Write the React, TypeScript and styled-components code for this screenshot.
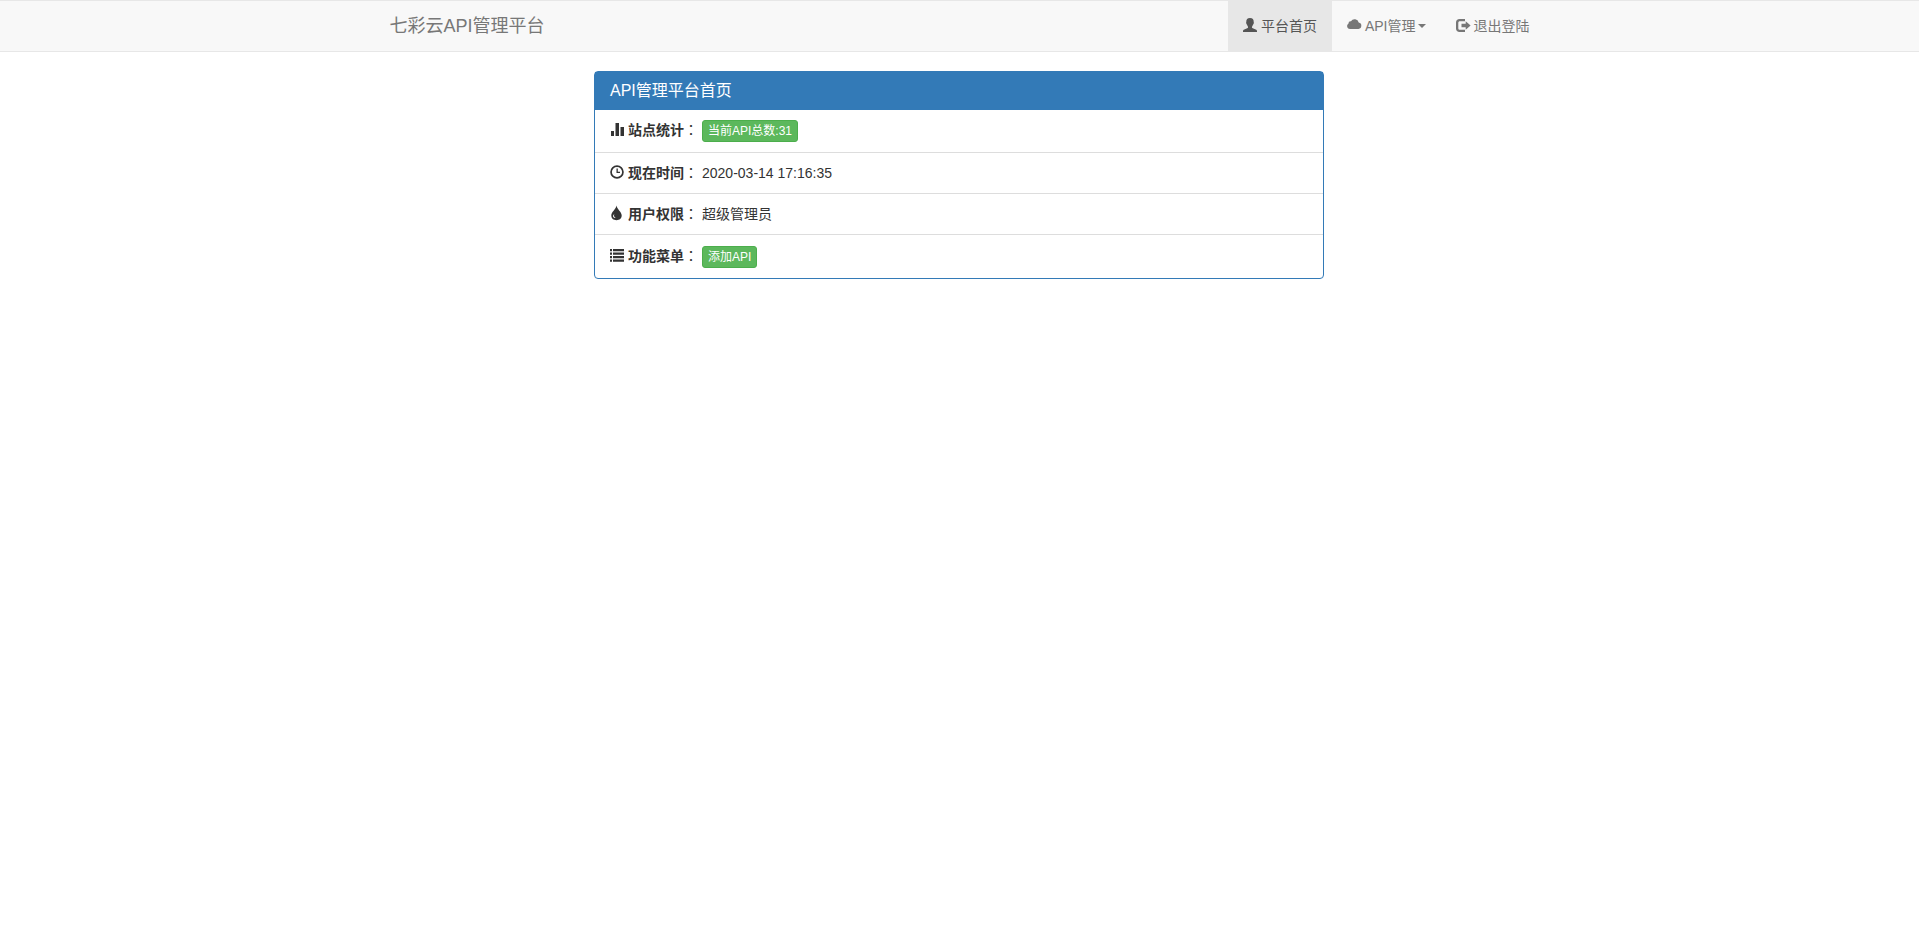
import React from "react";
import styled, { createGlobalStyle, css } from "styled-components";

const GlobalStyle = createGlobalStyle`
  *, *::before, *::after { box-sizing: border-box; }
  body {
    margin: 0;
    background: #fff;
    color: #333;
    font-family: "Liberation Sans", "Noto Sans CJK SC", sans-serif;
    font-size: 14px;
    line-height: 20px;
  }
`;

const Navbar = styled.header`
  background: #f8f8f8;
  border: solid #e7e7e7;
  border-width: 1px 0;
`;

const Container = styled.div`
  display: flex;
  justify-content: space-between;
  max-width: 1170px;
  margin: 0 auto;
  padding: 0 0 0 15px;
`;

const Brand = styled.a`
  padding: 15px 0;
  font-size: 18px;
  line-height: 20px;
  color: #777;
  text-decoration: none;
`;

const NavList = styled.ul`
  display: flex;
  margin: 0;
  padding: 0;
  list-style: none;
`;

const NavLink = styled.a<{ $active?: boolean }>`
  display: flex;
  align-items: center;
  height: 50px;
  padding: 0 15px;
  color: #777;
  text-decoration: none;
  ${(p) =>
    p.$active &&
    css`
      color: #555;
      background: #e7e7e7;
    `}
`;

const Glyph = styled.svg`
  flex: none;
  width: 14px;
  height: 14px;
  margin: 2px 4px 4px 0;
  fill: currentColor;
  overflow: visible;
`;

const Caret = styled.span`
  margin-left: 2px;
  border: 4px solid transparent;
  border-top-color: currentColor;
  border-bottom: 0;
`;

const Main = styled.main`
  max-width: 761px;
  margin: 19px auto 0;
  padding: 0 16px 0 15px;
`;

const Panel = styled.section`
  border: 1px solid #337ab7;
  border-radius: 4px;
`;

const PanelTitle = styled.h3`
  margin: 0;
  padding: 9px 15px;
  background: #337ab7;
  color: #fff;
  font-size: 16px;
  font-weight: 400;
  line-height: 20px;
`;

const Rows = styled.ul`
  margin: 0;
  padding: 0;
  list-style: none;
`;

const Row = styled.li`
  display: flex;
  align-items: flex-start;
  padding: 10px 15px;
  & + & {
    border-top: 1px solid #ddd;
  }
  &:last-child {
    padding-top: 11px;
  }
`;

const Label = styled.b`
  margin-right: 4px;
`;

const Colon = styled.span`
  font-family: "Noto Sans CJK TC", sans-serif;
  font-weight: 400;
  line-height: 1;
`;

const SmallButton = styled.button`
  height: 22px;
  padding: 0 5px;
  border: 1px solid #4cae4c;
  border-radius: 3px;
  background: #5cb85c;
  color: #fff;
  font: inherit;
  font-size: 12px;
  line-height: 18px;
  cursor: pointer;
`;

const glyphs = {
  user: "M7 0C4.300 0 3.200 1.500 3.300 3.800c0 .5-.3.800-.1 1.500.1.600.5.900.800 1.500.2.800.7 1.300 1 1.900.2.800-.1 1.200-.8 1.500L1.300 11.400C.4 11.800 0 12.200 0 12.900V14h14v-1.100c0-.7-.4-1.100-1.300-1.500L9.800 10.200c-.7-.3-1-.8-.8-1.500.3-.6.800-1.100 1-1.900.3-.6.700-.9.8-1.500.2-.7-.1-1-.1-1.500C10.800 1.500 9.700 0 7 0Z",
  cloud: "M3 11A2.900 2.900 0 0 1 1.500 5.600 2.300 2.300 0 0 1 4 3.200 4.200 4.200 0 0 1 11.700 4.500 3.300 3.300 0 0 1 11.500 11Z",
  logout: "M3.500 1H9V3.200H4C2.900 3.200 2.300 3.800 2.300 4.800V10.200C2.300 11.200 2.900 11.800 4 11.800H9V14H3.500C1.400 14 0 12.600 0 10.500V4.500C0 2.400 1.400 1 3.500 1ZM9.700 3.200 14.600 7.500 9.700 11.800V9.200H5.500V5.800H9.700Z",
  stats: "M1 9h3v5H1ZM5.500 1H9v13H5.500ZM10.500 5H14v9h-3.500Z",
  time: "M7 .2a6.800 6.800 0 1 0 0 13.600A6.800 6.800 0 0 0 7 .2Zm0 1.700a5.100 5.100 0 1 1 0 10.200A5.100 5.100 0 0 1 7 1.900ZM6.500 3.500h1.300v3.300H10V8H6.500Z",
  tint: "M6.500-.5C5.800 3.300 1.300 6.100 1.300 9.600 1.300 12.400 3.500 14.300 6.500 14.300s5.200-1.900 5.200-4.700C11.700 6.100 7.200 3.300 6.500-.5ZM4.300 8c-.8 1.900 0 3.300 1.600 4.100-2.500.2-4-2-1.600-4.100Z",
  list: "M0 1h2v2.300H0ZM3 1h11v2.300H3ZM0 4.500h2v2.300H0ZM3 4.500h11v2.300H3ZM0 8h2v2.300H0ZM3 8h11v2.300H3ZM0 11.500h2v2.300H0ZM3 11.500h11v2.300H3Z",
};

function Icon({ name }: { name: keyof typeof glyphs }) {
  return (
    <Glyph viewBox="0 0 14 14" aria-hidden="true">
      <path d={glyphs[name]} fillRule="evenodd" />
    </Glyph>
  );
}

function InfoRow(props: {
  icon: keyof typeof glyphs;
  label: string;
  children: React.ReactNode;
}) {
  return (
    <Row>
      <Icon name={props.icon} />
      <Label>
        {props.label}
        <Colon>：</Colon>
      </Label>
      {props.children}
    </Row>
  );
}

export default function App() {
  return (
    <>
      <GlobalStyle />
      <Navbar>
        <Container>
          <Brand href="#">七彩云API管理平台</Brand>
          <nav>
            <NavList>
              <li>
                <NavLink href="#" $active>
                  <Icon name="user" />
                  平台首页
                </NavLink>
              </li>
              <li>
                <NavLink href="#" aria-haspopup="true">
                  <Icon name="cloud" />
                  API管理
                  <Caret />
                </NavLink>
              </li>
              <li>
                <NavLink href="#">
                  <Icon name="logout" />
                  退出登陆
                </NavLink>
              </li>
            </NavList>
          </nav>
        </Container>
      </Navbar>
      <Main>
        <Panel>
          <PanelTitle>API管理平台首页</PanelTitle>
          <Rows>
            <InfoRow icon="stats" label="站点统计">
              <SmallButton type="button">当前API总数:31</SmallButton>
            </InfoRow>
            <InfoRow icon="time" label="现在时间">
              <span>2020-03-14 17:16:35</span>
            </InfoRow>
            <InfoRow icon="tint" label="用户权限">
              <span>超级管理员</span>
            </InfoRow>
            <InfoRow icon="list" label="功能菜单">
              <SmallButton type="button">添加API</SmallButton>
            </InfoRow>
          </Rows>
        </Panel>
      </Main>
    </>
  );
}
